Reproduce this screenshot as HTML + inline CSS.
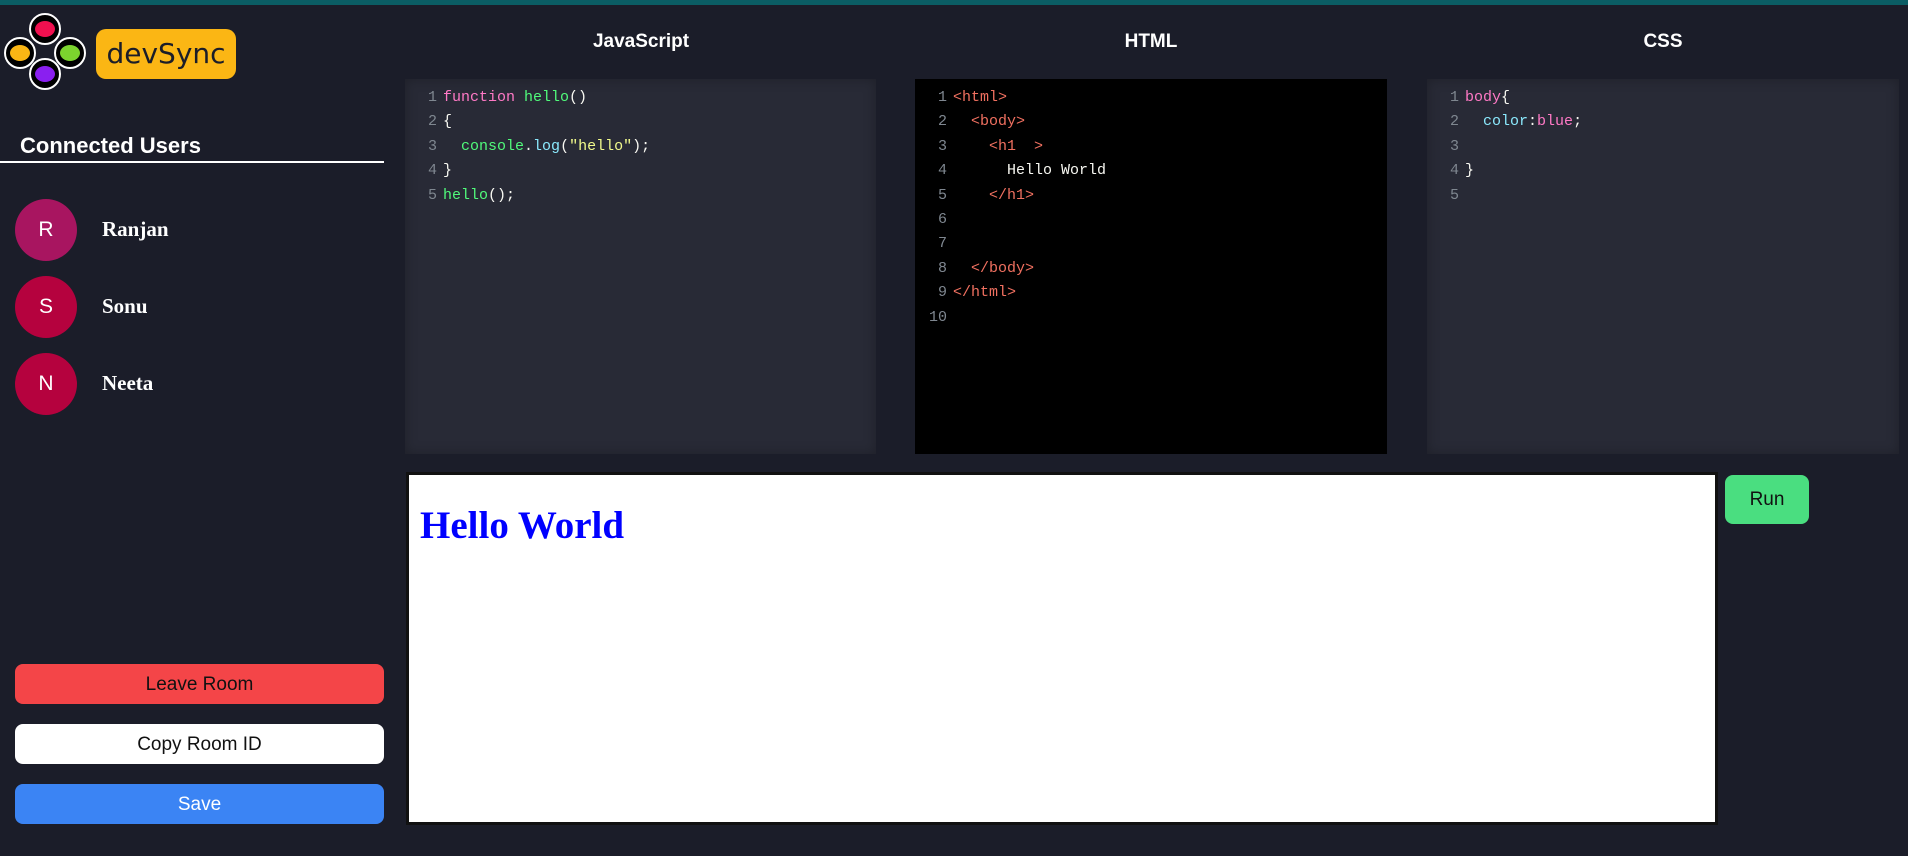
<!DOCTYPE html>
<html><head><meta charset="utf-8"><style>
*{margin:0;padding:0;box-sizing:border-box}
body{width:1908px;height:856px;background:#1b1d29;overflow:hidden;position:relative;font-family:"Liberation Sans",sans-serif}
.top{position:absolute;left:0;top:0;width:1908px;height:5px;background:#0b5d64}
.abs{position:absolute}
.badge{left:96px;top:29px;width:140px;height:50px;background:#fbb614;border-radius:10px;color:#1b1d29;font-size:28px;line-height:50px;text-align:center;font-family:"DejaVu Sans",sans-serif}
.cu{left:20px;top:133px;color:#fff;font-weight:bold;font-size:22px}
.line{left:0;top:161px;width:384px;height:2px;background:#fff}
.av{width:62px;height:62px;border-radius:50%;color:#fff;font-size:21px;line-height:62px;text-align:center;left:15px}
.nm{left:102px;color:#fff;font-family:"Liberation Serif",serif;font-size:21px;font-weight:bold}
.btn{left:15px;width:369px;height:40px;border-radius:8px;text-align:center;line-height:42px;font-size:19px}
.title{top:31px;color:#fff;font-weight:bold;font-size:19px;width:472px;text-align:center}
.ed{top:79px;height:375px;background:#282a36;font-family:"Liberation Mono",monospace;font-size:15px;padding-top:7px;box-shadow:inset 0 0 12px rgba(0,0,0,.25)}
.ln{height:24.4px;line-height:24.4px;white-space:pre;color:#f8f8f2}
.ln b{display:inline-block;width:38px;text-align:right;padding-right:6px;color:#7f8790;font-weight:normal}
.k{color:#ff79c6}.g{color:#50fa7b}.c{color:#8be9fd}.y{color:#f1fa8c}.t{color:#f07060}
</style></head><body>
<div class="top"></div>
<svg class="abs" style="left:0;top:10px" width="95" height="85">
<g stroke="#fff" stroke-width="2" fill="#000">
<circle cx="45" cy="19" r="15"/><circle cx="20" cy="43" r="15"/><circle cx="70" cy="43" r="15"/><circle cx="45" cy="64" r="15"/></g>
<ellipse cx="45" cy="19" rx="10" ry="8" fill="#f0104f"/>
<ellipse cx="20" cy="43" rx="10" ry="8" fill="#fbb614"/>
<ellipse cx="70" cy="43" rx="10" ry="8" fill="#7cd42e"/>
<ellipse cx="45" cy="64" rx="10" ry="8" fill="#8a1ff0"/>
</svg>
<div class="abs badge">devSync</div>
<div class="abs cu">Connected Users</div>
<div class="abs line"></div>
<div class="abs av" style="top:199px;background:#a81560">R</div><div class="abs nm" style="top:217px">Ranjan</div>
<div class="abs av" style="top:276px;background:#b5023e">S</div><div class="abs nm" style="top:294px">Sonu</div>
<div class="abs av" style="top:353px;background:#b5023e">N</div><div class="abs nm" style="top:371px">Neeta</div>
<div class="abs btn" style="top:664px;background:#f44548;color:#111">Leave Room</div>
<div class="abs btn" style="top:724px;background:#fff;color:#111">Copy Room ID</div>
<div class="abs btn" style="top:784px;background:#3b84f4;color:#fff">Save</div>

<div class="abs title" style="left:405px">JavaScript</div>
<div class="abs title" style="left:915px">HTML</div>
<div class="abs title" style="left:1427px">CSS</div>

<div class="abs ed" style="left:405px;width:471px">
<div class="ln"><b>1</b><span class="k">function</span> <span class="g">hello</span>()</div>
<div class="ln"><b>2</b>{</div>
<div class="ln"><b>3</b>  <span class="g">console</span>.<span class="c">log</span>(<span class="y">"hello"</span>);</div>
<div class="ln"><b>4</b>}</div>
<div class="ln"><b>5</b><span class="g">hello</span>();</div>
</div>
<div class="abs ed" style="left:915px;width:472px;background:#000;box-shadow:none">
<div class="ln"><b>1</b><span class="t">&lt;html&gt;</span></div>
<div class="ln"><b>2</b>  <span class="t">&lt;body&gt;</span></div>
<div class="ln"><b>3</b>    <span class="t">&lt;h1  &gt;</span></div>
<div class="ln"><b>4</b>      Hello World</div>
<div class="ln"><b>5</b>    <span class="t">&lt;/h1&gt;</span></div>
<div class="ln"><b>6</b></div>
<div class="ln"><b>7</b></div>
<div class="ln"><b>8</b>  <span class="t">&lt;/body&gt;</span></div>
<div class="ln"><b>9</b><span class="t">&lt;/html&gt;</span></div>
<div class="ln"><b>10</b></div>
</div>
<div class="abs ed" style="left:1427px;width:472px">
<div class="ln"><b>1</b><span class="k">body</span>{</div>
<div class="ln"><b>2</b>  <span class="c">color</span>:<span class="k">blue</span>;</div>
<div class="ln"><b>3</b></div>
<div class="ln"><b>4</b>}</div>
<div class="ln"><b>5</b></div>
</div>

<div class="abs" style="left:406px;top:472px;width:1312px;height:353px;background:#fff;border:3px solid #111">
<div style="position:absolute;left:11px;top:28px;color:#0000ff;font-family:'Liberation Serif',serif;font-weight:bold;font-size:39px">Hello World</div>
</div>
<div class="abs" style="left:1725px;top:475px;width:84px;height:49px;background:#4ade80;border-radius:8px;text-align:center;line-height:49px;font-size:19px;color:#111">Run</div>
</body></html>
